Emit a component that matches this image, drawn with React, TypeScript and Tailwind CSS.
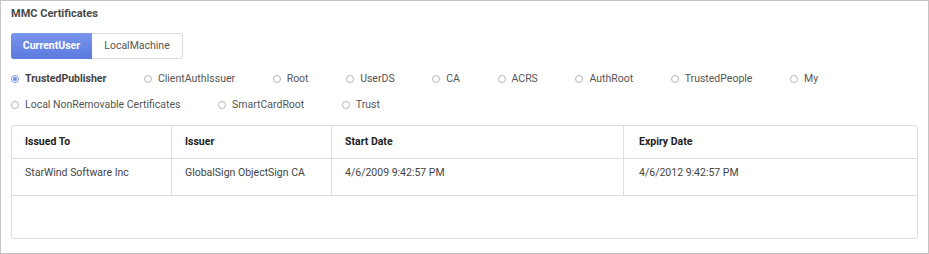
import { useState } from 'react'

const stores = [
  'TrustedPublisher',
  'ClientAuthIssuer',
  'Root',
  'UserDS',
  'CA',
  'ACRS',
  'AuthRoot',
  'TrustedPeople',
  'My',
  'Local NonRemovable Certificates',
  'SmartCardRoot',
  'Trust',
]

const certs = [
  {
    issuedTo: 'StarWind Software Inc',
    issuer: 'GlobalSign ObjectSign CA',
    start: '4/6/2009 9:42:57 PM',
    expiry: '4/6/2012 9:42:57 PM',
  },
]

function Radio({ label, checked, onClick }: { label: string; checked: boolean; onClick: () => void }) {
  return (
    <button onClick={onClick} className="flex items-center gap-[6px] h-[26px] text-left">
      <span
        className={`w-[8px] h-[8px] rounded-full border flex items-center justify-center ${
          checked ? 'border-[#7b93e3]' : 'border-[#b5b5b5]'
        }`}
      >
        {checked && <span className="w-[4px] h-[4px] rounded-full bg-[#6f8ae3]" />}
      </span>
      <span className={checked ? 'font-bold text-[#444]' : 'text-[#555]'}>{label}</span>
    </button>
  )
}

export default function App() {
  const [scope, setScope] = useState<'user' | 'machine'>('user')
  const [store, setStore] = useState('TrustedPublisher')

  return (
    <div
      className="w-[929px] h-[254px] bg-white border border-[#c4c4c4] px-[10px] pt-[5px] text-[10.5px]"
      style={{ fontFamily: 'Roboto, "Liberation Sans", sans-serif' }}
    >
      <h1 className="text-[11px] font-bold text-[#4a4a4a] leading-[16px]">MMC Certificates</h1>

      <div className="flex mt-[11px] w-fit">
        <button
          onClick={() => setScope('user')}
          className={`w-[81px] h-[26px] rounded-l-[3px] ${
            scope === 'user'
              ? 'bg-gradient-to-b from-[#7895ea] to-[#5c7ade] text-white font-bold'
              : 'border border-[#dcdcdc] text-[#555]'
          }`}
        >
          CurrentUser
        </button>
        <button
          onClick={() => setScope('machine')}
          className={`w-[91px] h-[26px] rounded-r-[3px] ${
            scope === 'machine'
              ? 'bg-gradient-to-b from-[#7895ea] to-[#5c7ade] text-white font-bold'
              : 'border border-[#dcdcdc] border-l-0 text-[#555]'
          }`}
        >
          LocalMachine
        </button>
      </div>

      <div className="flex flex-wrap gap-x-[37.6px] mt-[7px] pr-[90px]">
        {stores.map(s => (
          <Radio key={s} label={s} checked={store === s} onClick={() => setStore(s)} />
        ))}
      </div>

      <div className="mt-[7px] border border-[#dedede] rounded-[3px] h-[114px]">
        <div className="grid grid-cols-[159px_160px_292px_1fr] border-b border-[#dedede] h-[33px] font-bold text-[#222]">
          <div className="flex items-center px-[13px]">Issued To</div>
          <div className="flex items-center px-[13px] border-l border-[#dedede]">Issuer</div>
          <div className="flex items-center px-[13px] border-l border-[#dedede]">Start Date</div>
          <div className="flex items-center px-[15px] border-l border-[#dedede]">Expiry Date</div>
        </div>
        {certs.map(c => (
          <div
            key={c.issuedTo}
            className="grid grid-cols-[159px_160px_292px_1fr] border-b border-[#dedede] h-[37px] text-[#444]"
          >
            <div className="pt-[6px] px-[13px]">{c.issuedTo}</div>
            <div className="pt-[6px] px-[13px] border-l border-[#dedede]">{c.issuer}</div>
            <div className="pt-[6px] px-[13px] border-l border-[#dedede]">{c.start}</div>
            <div className="pt-[6px] px-[15px] border-l border-[#dedede]">{c.expiry}</div>
          </div>
        ))}
      </div>
    </div>
  )
}
